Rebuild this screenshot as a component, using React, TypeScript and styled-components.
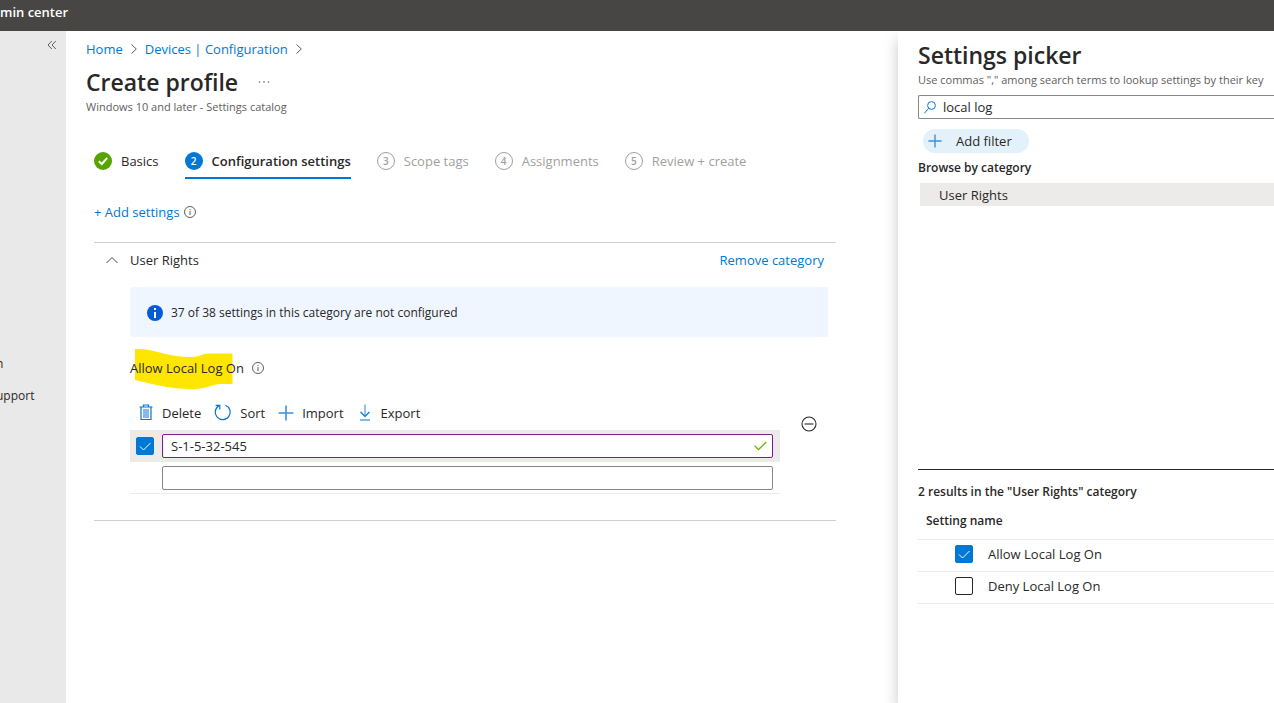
import React, { useState } from "react";
import styled, { createGlobalStyle, css } from "styled-components";

const GlobalStyle = createGlobalStyle`
  *, *::before, *::after { box-sizing: border-box; }
  body {
    margin: 0;
    background: #ffffff;
    color: #292827;
    font-family: "Open Sans", "Noto Sans", sans-serif;
    font-size: 13px;
    line-height: 20px;
  }
  button, input { font: inherit; color: inherit; }
  h1, h2, h3, p, ol, ul { margin: 0; padding: 0; }
  ol, ul { list-style: none; }
`;

const Page = styled.div`
  display: flex;
  flex-direction: column;
  min-height: 100vh;
`;

const TopBar = styled.header`
  height: 31px;
  padding-top: 2px;
  background: #484644;
  color: #ffffff;
  font-size: 13px;
  font-weight: 600;
`;

const Body = styled.div`
  flex: 1;
  display: grid;
  grid-template-columns: 66px minmax(0, 1fr) 376px;
`;

const SideNav = styled.nav`
  display: flex;
  flex-direction: column;
  background: #e9e9e9;
`;

const CollapseButton = styled.button`
  align-self: flex-end;
  display: flex;
  margin: 9px 9px 300px 0;
  padding: 0;
  border: 0;
  background: none;
`;

const NavLink = styled.a`
  height: 32px;
  padding-top: 4px;
  color: #292827;
  font-size: 12px;
  text-decoration: none;
  text-indent: -4px;
`;

const Main = styled.main`
  padding: 8px 62px 24px 20px;
`;

const Breadcrumb = styled.nav`
  display: flex;
  align-items: center;
  gap: 8px;
`;

const Link = styled.a`
  color: #0078d4;
  text-decoration: none;
`;

const TitleRow = styled.div`
  display: flex;
  align-items: center;
  gap: 20px;
  margin-top: 7px;
`;

const Title = styled.h1`
  font-size: 23px;
  line-height: 32px;
  font-weight: 600;
  white-space: nowrap;
`;

const IconButton = styled.button`
  display: flex;
  padding: 0;
  border: 0;
  background: none;
`;

const Subtitle = styled.p`
  color: #605e5c;
  font-size: 11px;
  line-height: 18px;
  white-space: nowrap;
`;

const Content = styled.div`
  padding-left: 8px;
`;

const Steps = styled.ol`
  display: flex;
  gap: 26px;
  margin-top: 34px;
`;

type StepState = "done" | "current" | "todo";

const Step = styled.li<{ $state: StepState }>`
  display: flex;
  align-items: center;
  gap: 9px;
  height: 29px;
  padding-bottom: 5px;
  border-bottom: 2px solid ${(p) => (p.$state === "current" ? "#0078d4" : "transparent")};
  color: ${(p) => (p.$state === "todo" ? "#a19f9d" : "#292827")};
  font-weight: ${(p) => (p.$state === "current" ? 600 : 400)};
  white-space: nowrap;
`;

const StepBadge = styled.span<{ $state: StepState }>`
  display: flex;
  align-items: center;
  justify-content: center;
  width: 18px;
  height: 18px;
  border-radius: 50%;
  font-size: 10px;
  line-height: 16px;
  font-weight: 600;
  ${(p) =>
    p.$state === "todo"
      ? css`
          border: 1px solid #a19f9d;
        `
      : css`
          color: #ffffff;
          background: ${p.$state === "done" ? "#57a300" : "#0078d4"};
        `}
`;

const AddRow = styled.div`
  display: flex;
  align-items: center;
  gap: 4px;
  margin: 23px 0 20px;
`;

const LinkButton = styled.button`
  padding: 0;
  border: 0;
  background: none;
  color: #0078d4;
`;

const Category = styled.section`
  padding: 7px 8px 26px 12px;
  border-top: 1px solid #d2d0ce;
  border-bottom: 1px solid #d2d0ce;
`;

const CategoryHead = styled.div`
  display: flex;
  align-items: center;
  gap: 12px;
  padding-right: 4px;
`;

const CategoryName = styled.h2`
  flex: 1;
  font-size: 13px;
  font-weight: 400;
`;

const CategoryBody = styled.div`
  padding-left: 24px;
`;

const InfoBar = styled.div`
  display: flex;
  align-items: center;
  gap: 8px;
  height: 50px;
  margin-top: 17px;
  padding: 1px 17px 0;
  border-radius: 2px;
  background: #eff6ff;
  font-size: 12px;
`;

const SettingLabel = styled.div`
  position: relative;
  display: flex;
  align-items: center;
  gap: 8px;
  margin-top: 21px;
`;

const Highlight = styled.svg`
  position: absolute;
  left: 5px;
  top: -9px;
`;

const LabelText = styled.span`
  position: relative;
`;

const SettingArea = styled.div`
  display: flex;
  align-items: flex-start;
  gap: 21px;
  margin-top: 24px;
`;

const ValueEditor = styled.div`
  flex: 1;
  max-width: 650px;
`;

const RemoveButton = styled(IconButton)`
  margin-top: 14px;
`;

const Toolbar = styled.div`
  display: flex;
  gap: 13px;
  padding: 0 8px 7px;
`;

const Command = styled.button`
  display: flex;
  align-items: center;
  gap: 8px;
  height: 21px;
  padding: 0;
  border: 0;
  background: none;
`;

const ValueRow = styled.div<{ $selected?: boolean }>`
  display: flex;
  align-items: center;
  gap: 8px;
  padding: 4px 7px 3px ${(p) => (p.$selected ? 6 : 32)}px;
  border-bottom: 1px solid #edebe9;
  background: ${(p) => (p.$selected ? "#edebe9" : "none")};
`;

const Field = styled.div<{ $edited?: boolean }>`
  flex: 1;
  display: flex;
  align-items: center;
  height: 24px;
  padding: 0 5px 0 8px;
  border: 1px solid ${(p) => (p.$edited ? "#881798" : "#8a8886")};
  border-radius: 2px;
  background: #ffffff;
`;

const TextInput = styled.input`
  flex: 1;
  min-width: 0;
  height: 20px;
  padding: 0;
  border: 0;
  outline: 0;
  background: none;
`;

const CheckWrap = styled.span`
  display: grid;
  width: 18px;
  height: 18px;
  & > * { grid-area: 1 / 1; }
  & > svg { pointer-events: none; }
`;

const CheckInput = styled.input`
  appearance: none;
  width: 18px;
  height: 18px;
  margin: 0;
  border: 1px solid #292827;
  border-radius: 2px;
  background: #ffffff;
  &:checked {
    border-color: #0078d4;
    background: #0078d4;
  }
`;

const Panel = styled.aside`
  display: flex;
  flex-direction: column;
  min-width: 0;
  padding: 8px 0 24px 20px;
  background: #ffffff;
  box-shadow: 0 8px 14px rgba(0, 0, 0, 0.22);
  clip-path: inset(0 0 0 -16px);
`;

const SearchBox = styled.div`
  display: flex;
  align-items: center;
  gap: 7px;
  height: 24px;
  margin-top: 6px;
  padding-left: 5px;
  border: 1px solid #8a8886;
  border-right: 0;
  border-radius: 2px 0 0 2px;
`;

const FilterPill = styled.button`
  align-self: flex-start;
  display: flex;
  align-items: center;
  gap: 14px;
  height: 24px;
  margin: 10px 0 5px 5px;
  padding: 0 17px 0 5px;
  border: 0;
  border-radius: 12px;
  background: #e3f1fb;
`;

const PanelHeading = styled.h3`
  font-size: 12px;
  line-height: 20px;
  font-weight: 600;
`;

const CategoryList = styled.ul`
  min-height: 291px;
  padding: 5px 0 0 2px;
`;

const CategoryItem = styled.li`
  height: 23px;
  padding: 2px 19px;
  background: #edebe9;
`;

const Results = styled.section`
  padding-top: 12px;
  border-top: 1px solid #292827;
`;

const ResultTable = styled.table`
  width: 100%;
  margin-top: 1px;
  border-collapse: collapse;
  th {
    height: 36px;
    padding: 0 8px;
    font-size: 12px;
    font-weight: 600;
    text-align: left;
  }
  td {
    height: 32px;
    padding: 0 0 3px 37px;
  }
  tr {
    border-bottom: 1px solid #edebe9;
  }
`;

const ResultLabel = styled.label`
  display: flex;
  align-items: center;
  gap: 15px;
`;

const Chevron = () => (
  <svg width="6" height="12" viewBox="0 0 6 12" fill="none" stroke="#605e5c" aria-hidden="true">
    <path d="M.5 1.5 5.3 6 .5 10.5" />
  </svg>
);

const InfoOutline = () => (
  <svg width="12" height="12" viewBox="0 0 12 12" fill="none" stroke="#605e5c" aria-hidden="true">
    <circle cx="6" cy="6" r="5.5" />
    <path d="M6 5v4M6 3v1" />
  </svg>
);

const Plus = ({ size }: { size: number }) => (
  <svg width={size} height={size} viewBox="0 0 16 16" fill="none" stroke="#3a93de" strokeWidth="1.6" aria-hidden="true">
    <path d="M8 .5v15M.5 8h15" />
  </svg>
);

const TrashIcon = () => (
  <svg width="16" height="17" viewBox="0 0 16 17" fill="none" stroke="#0078d4" aria-hidden="true">
    <path d="M1.5 3h13M5.5 2.5V1h5v1.5M3 3v12.5h10V3" strokeWidth="1.2" />
    <path d="M5 5h6v9H5z" fill="#83b9eb" stroke="none" />
  </svg>
);

const SortIcon = () => (
  <svg width="18" height="17" viewBox="0 0 18 17" fill="none" stroke="#0078d4" strokeWidth="1.2" aria-hidden="true">
    <path d="M11.5 1.2a7.5 7.5 0 1 1-6.4.4" />
    <path d="M1.6 1.3h4.2v4.2" />
  </svg>
);

const ExportIcon = () => (
  <svg width="16" height="17" viewBox="-2 0 16 17" fill="none" stroke="#0078d4" strokeWidth="1.2" aria-hidden="true">
    <path d="M6 .5v12" stroke="#4a9be0" />
    <path d="M1.5 8 6 12.5 10.500 8M1 16h10" />
  </svg>
);

const CheckBox = (props: React.InputHTMLAttributes<HTMLInputElement>) => (
  <CheckWrap>
    <CheckInput type="checkbox" {...props} />
    <svg width="18" height="18" viewBox="0 0 18 18" fill="none" stroke="#ffffff" aria-hidden="true">
      <path d="M4 9.500 7.500 13 14.500 6" />
    </svg>
  </CheckWrap>
);

const steps: { label: string; state: StepState }[] = [
  { label: "Basics", state: "done" },
  { label: "Configuration settings", state: "current" },
  { label: "Scope tags", state: "todo" },
  { label: "Assignments", state: "todo" },
  { label: "Review + create", state: "todo" },
];

const App = () => {
  const [values, setValues] = useState(["S-1-5-32-545", ""]);
  const [search, setSearch] = useState("local log");
  const setValue = (index: number, value: string) =>
    setValues(values.map((v, i) => (i === index ? value : v)));

  return (
    <>
      <GlobalStyle />
      <Page>
        <TopBar>min center</TopBar>
        <Body>
          <SideNav aria-label="Main">
            <CollapseButton aria-label="Collapse menu">
              <svg width="10" height="10" viewBox="0 0 10 10" fill="none" stroke="#605e5c">
                <path d="M4.800 1 1 5l3.800 4M8.800 1 5 5l3.800 4" />
              </svg>
            </CollapseButton>
            <NavLink href="#">n</NavLink>
            <NavLink href="#">upport</NavLink>
          </SideNav>

          <Main>
            <Breadcrumb aria-label="Breadcrumb">
              <Link href="#">Home</Link>
              <Chevron />
              <Link href="#">Devices | Configuration</Link>
              <Chevron />
            </Breadcrumb>
            <TitleRow>
              <Title>Create profile</Title>
              <IconButton aria-label="More">
                <svg width="12" height="4" viewBox="0 0 12 4" fill="#605e5c">
                  <circle cx="1.500" cy="2" r=".8" />
                  <circle cx="6" cy="2" r=".8" />
                  <circle cx="10.500" cy="2" r=".8" />
                </svg>
              </IconButton>
            </TitleRow>
            <Subtitle>Windows 10 and later - Settings catalog</Subtitle>

            <Content>
              <Steps>
                {steps.map((step, i) => (
                  <Step key={step.label} $state={step.state}>
                    <StepBadge $state={step.state}>
                      {step.state === "done" ? (
                        <svg width="10" height="10" viewBox="0 0 10 10" fill="none" stroke="#ffffff" strokeWidth="2">
                          <path d="M.8 5.200 3.800 8 9.200 2" />
                        </svg>
                      ) : (
                        i + 1
                      )}
                    </StepBadge>
                    {step.label}
                  </Step>
                ))}
              </Steps>

              <AddRow>
                <LinkButton>+ Add settings</LinkButton>
                <InfoOutline />
              </AddRow>

              <Category>
                <CategoryHead>
                  <IconButton aria-label="Collapse category">
                    <svg width="12" height="8" viewBox="0 0 12 8" fill="none" stroke="#484644">
                      <path d="M.5 7 6 1.500 11.500 7" />
                    </svg>
                  </IconButton>
                  <CategoryName>User Rights</CategoryName>
                  <LinkButton>Remove category</LinkButton>
                </CategoryHead>
                <CategoryBody>
                  <InfoBar>
                    <svg width="16" height="16" viewBox="0 0 16 16" aria-hidden="true">
                      <circle cx="8" cy="8" r="8" fill="#015cda" />
                      <path d="M7 7h2v6H7zM7 3h2v2H7z" fill="#ffffff" />
                    </svg>
                    37 of 38 settings in this category are not configured
                  </InfoBar>
                  <SettingLabel>
                    <Highlight width="98" height="41" viewBox="0 0 98 41" aria-hidden="true">
                      <path
                        d="M0 0H8C20 1 35 8 55 8C66 8 66 4.500 75 4.500H97.500V35H87C76 35 74 40 57 40C35 40 16 35 0 31Z"
                        fill="#ffe600"
                      />
                    </Highlight>
                    <LabelText>Allow Local Log On</LabelText>
                    <InfoOutline />
                  </SettingLabel>
                  <SettingArea>
                    <ValueEditor>
                      <Toolbar>
                        <Command><TrashIcon />Delete</Command>
                        <Command><SortIcon />Sort</Command>
                        <Command><Plus size={16} />Import</Command>
                        <Command><ExportIcon />Export</Command>
                      </Toolbar>
                      <ValueRow $selected>
                        <CheckBox defaultChecked aria-label="Select S-1-5-32-545" />
                        <Field $edited>
                          <TextInput
                            aria-label="Value 1"
                            value={values[0]}
                            onChange={(e) => setValue(0, e.target.value)}
                          />
                          <svg width="13" height="10" viewBox="0 0 13 10" fill="none" stroke="#6bb700" strokeWidth="1.300">
                            <path d="M.7 4.800 4.500 8.600 12.300 1" />
                          </svg>
                        </Field>
                      </ValueRow>
                      <ValueRow>
                        <Field>
                          <TextInput
                            aria-label="Value 2"
                            value={values[1]}
                            onChange={(e) => setValue(1, e.target.value)}
                          />
                        </Field>
                      </ValueRow>
                    </ValueEditor>
                    <RemoveButton aria-label="Remove setting">
                      <svg width="16" height="16" viewBox="0 0 16 16" fill="none" stroke="#292827" strokeWidth="1.100">
                        <circle cx="8" cy="8" r="7" />
                        <path d="M3.500 8h9" />
                      </svg>
                    </RemoveButton>
                  </SettingArea>
                </CategoryBody>
              </Category>
            </Content>
          </Main>

          <Panel>
            <Title as="h2">Settings picker</Title>
            <Subtitle>Use commas "," among search terms to lookup settings by their key</Subtitle>
            <SearchBox>
              <svg width="12" height="13" viewBox="0 0 12 13" fill="none" stroke="#0078d4" aria-hidden="true">
                <circle cx="7.500" cy="4.500" r="3.900" />
                <path d="M4.700 7.300.4 12.300" />
              </svg>
              <TextInput
                aria-label="Search settings"
                value={search}
                onChange={(e) => setSearch(e.target.value)}
              />
            </SearchBox>
            <FilterPill>
              <Plus size={14} />
              Add filter
            </FilterPill>
            <PanelHeading>Browse by category</PanelHeading>
            <CategoryList>
              <CategoryItem>User Rights</CategoryItem>
            </CategoryList>
            <Results>
              <PanelHeading>2 results in the "User Rights" category</PanelHeading>
              <ResultTable>
                <thead>
                  <tr>
                    <th>Setting name</th>
                  </tr>
                </thead>
                <tbody>
                  <tr>
                    <td>
                      <ResultLabel>
                        <CheckBox defaultChecked />
                        Allow Local Log On
                      </ResultLabel>
                    </td>
                  </tr>
                  <tr>
                    <td>
                      <ResultLabel>
                        <CheckBox />
                        Deny Local Log On
                      </ResultLabel>
                    </td>
                  </tr>
                </tbody>
              </ResultTable>
            </Results>
          </Panel>
        </Body>
      </Page>
    </>
  );
};

export default App;
